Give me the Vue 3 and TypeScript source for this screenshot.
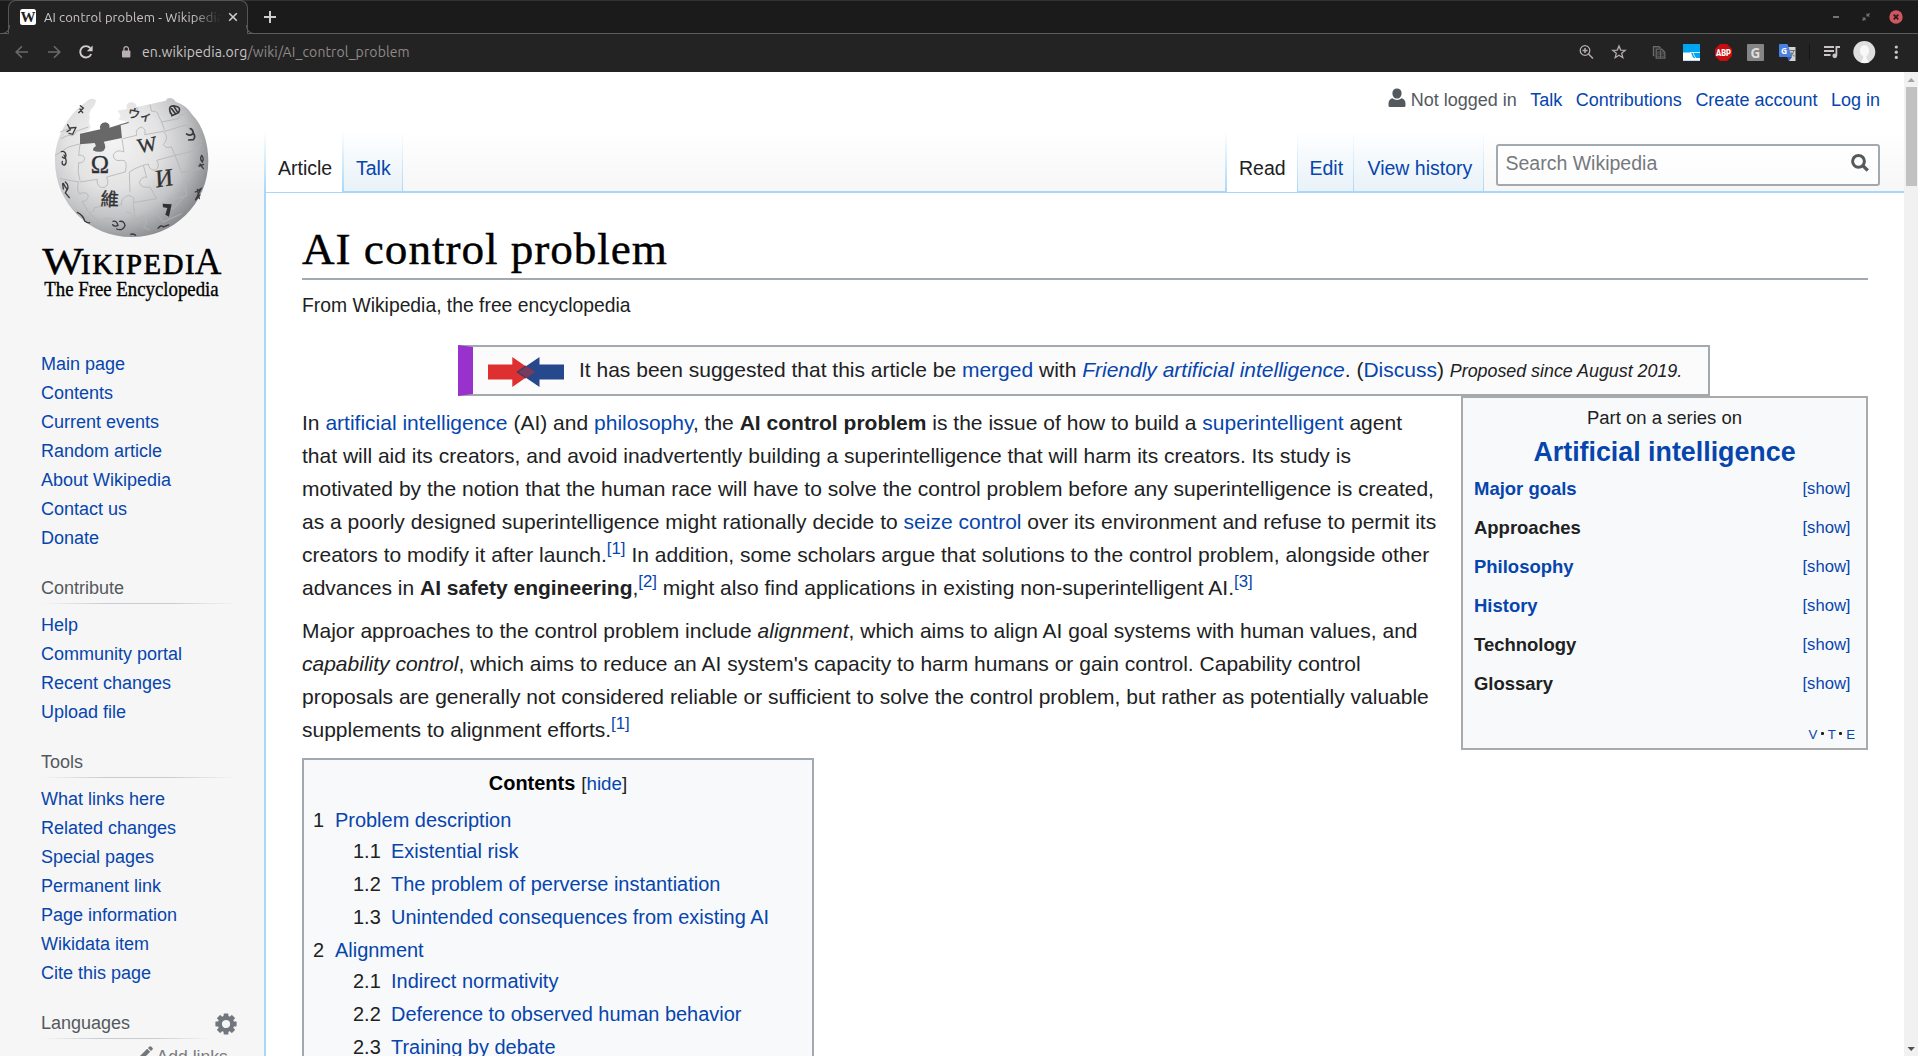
<script setup lang="ts">
interface NavItem { label: string }
interface NavGroup { title: string; items: string[] }
interface TocEntry { num: string; label: string; sub: boolean }
interface SeriesRow { label: string; link: boolean }

const mainLinks: NavItem[] = [
  'Main page', 'Contents', 'Current events', 'Random article',
  'About Wikipedia', 'Contact us', 'Donate',
].map((label) => ({ label }))

const groups: NavGroup[] = [
  { title: 'Contribute', items: ['Help', 'Community portal', 'Recent changes', 'Upload file'] },
  {
    title: 'Tools',
    items: [
      'What links here', 'Related changes', 'Special pages', 'Permanent link',
      'Page information', 'Wikidata item', 'Cite this page',
    ],
  },
]

const toc: TocEntry[] = [
  { num: '1', label: 'Problem description', sub: false },
  { num: '1.1', label: 'Existential risk', sub: true },
  { num: '1.2', label: 'The problem of perverse instantiation', sub: true },
  { num: '1.3', label: 'Unintended consequences from existing AI', sub: true },
  { num: '2', label: 'Alignment', sub: false },
  { num: '2.1', label: 'Indirect normativity', sub: true },
  { num: '2.2', label: 'Deference to observed human behavior', sub: true },
  { num: '2.3', label: 'Training by debate', sub: true },
]

const series: SeriesRow[] = [
  { label: 'Major goals', link: true },
  { label: 'Approaches', link: false },
  { label: 'Philosophy', link: true },
  { label: 'History', link: true },
  { label: 'Technology', link: false },
  { label: 'Glossary', link: false },
]

const gearTeeth = [0, 45, 90, 135, 180, 225, 270, 315]
</script>

<template>
  <div class="window">
    <header class="browser">
      <div class="strip">
        <div class="tab">
          <svg class="favicon" viewBox="0 0 16 16">
            <rect width="16" height="16" rx="2.5" fill="#fff" />
            <text x="8" y="13" text-anchor="middle" textLength="15" lengthAdjust="spacingAndGlyphs" font-family="Liberation Serif, serif" font-size="14" font-weight="700" fill="#222">W</text>
          </svg>
          <span class="tab-title">AI control problem - Wikipedia</span>
          <svg class="tab-close" viewBox="0 0 10 10"><path d="M1.2 1.2l7.6 7.6M8.8 1.2L1.2 8.8" stroke="#d3cccc" stroke-width="1.6" /></svg>
        </div>
        <svg class="new-tab" viewBox="0 0 14 14"><path d="M7 1v12M1 7h12" stroke="#d3cccc" stroke-width="2" /></svg>
        <svg class="win-buttons" viewBox="0 0 80 20">
          <rect x="6" y="9" width="6" height="2" fill="#757575" />
          <path d="M35 10.500h3.500V14zM39.500 6v3.500H43z" fill="#757575" /><path d="M35.500 13.500l2-2M40.500 8.500l2-2" stroke="#757575" stroke-width="1.400" />
          <circle cx="69" cy="10" r="6.7" fill="#d25560" /><path d="M66.700 7.700l4.600 4.600M71.300 7.700l-4.600 4.600" stroke="#262021" stroke-width="1.900" />
        </svg>
      </div>
      <div class="toolbar">
        <svg class="tb back" viewBox="0 0 24 24"><path d="M18 12H6.500M12 6.200L6.200 12l5.800 5.800" fill="none" stroke="#6e6969" stroke-width="1.600" /></svg>
        <svg class="tb fwd" viewBox="0 0 24 24"><path d="M6 12h11.500M12 6.200l5.800 5.800-5.800 5.800" fill="none" stroke="#6e6969" stroke-width="1.600" /></svg>
        <svg class="tb reload" viewBox="0 0 24 24"><path d="M17.200 14a5.700 5.700 0 1 1-1-6" fill="none" stroke="#d3cccc" stroke-width="1.900" /><path d="M18.600 5.400v5.800h-5.800z" fill="#d3cccc" /></svg>
        <svg class="lock" viewBox="0 0 10 12"><rect x="1" y="4.500" width="8.400" height="7" rx="1" fill="#b9b1b1" /><path d="M2.900 5V3a2.300 2.300 0 0 1 4.600 0v2" fill="none" stroke="#b9b1b1" stroke-width="1.200" /></svg>
        <span class="url">en.wikipedia.org<i>/wiki/AI_control_problem</i></span>
        <div class="extensions">
          <svg class="tb" viewBox="0 0 24 24"><circle cx="11" cy="10.500" r="4.800" fill="none" stroke="#b5adad" stroke-width="1.300" /><path d="M14.500 14l4.500 4.500M11 8v5M8.500 10.500h5" stroke="#b5adad" stroke-width="1.500" /></svg>
          <svg class="tb star" viewBox="0 0 24 24"><path d="M12 5.900l1.700 4.200 4.500.3-3.500 2.900 1.100 4.400-3.800-2.400-3.800 2.400 1.100-4.400-3.500-2.900 4.500-.3z" fill="none" stroke="#b5adad" stroke-width="1.300" /></svg>
          <svg class="tb copy" viewBox="0 0 24 24"><path d="M7.500 15.500h-1V6.700h5.500l1.500 1.500" fill="none" stroke="#6b6868" stroke-width="1.400" /><path d="M9.200 9.200h5.600l3 3v6H9.200z" fill="none" stroke="#6b6868" stroke-width="1.300" /><path d="M10 12h7M10 14h7M10 16.200h7M13.500 10v8" stroke="#6b6868" stroke-width=".9" /></svg>
          <svg class="tb ext" viewBox="0 0 24 24"><rect x="4" y="4" width="17" height="16.700" fill="#00a4ef" /><path d="M4 12.500h7q1.500 0 2 2.500t2 3H21v2.700H4z" fill="#fff" /><path d="M11 12.500h10M14 12.500q1.200 4.500 3 5.500" fill="none" stroke="#fff" stroke-width=".8" /></svg>
          <svg class="tb ext" viewBox="0 0 24 24"><path d="M9 4h7l5 5v7l-5 5H9l-5-5V9z" fill="#c70d0d" /><text x="12.500" y="15.600" text-anchor="middle" textLength="15" lengthAdjust="spacingAndGlyphs" font-family="Roboto, sans-serif" font-size="8.500" font-weight="900" fill="#fff">ABP</text></svg>
          <svg class="tb ext" viewBox="0 0 24 24"><rect x="4" y="4" width="17" height="17" rx="1" fill="#858585" /><text x="12.500" y="17.500" text-anchor="middle" font-family="Open Sans, sans-serif" font-size="13.500" font-weight="700" fill="#ddd">G</text></svg>
          <svg class="tb ext" viewBox="0 0 24 24"><path d="M11 7h9.500v14H14z" fill="#d4d4d4" /><path d="M5 4h7.500l4.500 13H5a1 1 0 0 1-1-1V5a1 1 0 0 1 1-1z" fill="#4a80e0" /><path d="M12 17h5l-3 4z" fill="#3457b5" /><path d="M15 10.500h5M18.800 10.500c-.5 3-2 4.500-3 5.200M16 12.500l3.500 3.800" stroke="#69767d" stroke-width="1.100" fill="none" /><text x="9" y="14" text-anchor="middle" font-family="Open Sans, sans-serif" font-size="8.500" font-weight="700" fill="#fff">G</text></svg>
          <span class="divider"></span>
          <svg class="tb" viewBox="0 0 24 24"><path d="M4 7h10M4 11h10M4 15h6.500" stroke="#cbc4c4" stroke-width="1.800" /><path d="M16.400 15.500V7h3.600" stroke="#cbc4c4" stroke-width="1.800" fill="none" /><circle cx="14.800" cy="15.800" r="2.400" fill="#cbc4c4" /></svg>
          <svg class="tb" viewBox="0 0 24 24"><circle cx="12.300" cy="12" r="11" fill="#dedede" /><path d="M8 10.500C8 3.500 17 3.500 17 10.500c0 3-1.200 4.500-2.500 5.500v2.500l3 3.800q-5 1.600-9 .2l2.500-3.500.3-3C9.200 15 8 13.500 8 10.500z" fill="#f8f8f8" /></svg>
          <svg class="tb" viewBox="0 0 24 24"><g fill="#cbc4c4"><circle cx="12.300" cy="7" r="1.600" /><circle cx="12.300" cy="12.200" r="1.600" /><circle cx="12.300" cy="17.400" r="1.600" /></g></svg>
        </div>
      </div>
    </header>

    <div class="page">
      <div class="viewport">
        <aside class="panel">
          <svg class="logo" viewBox="120 60 550 640">
            <defs>
              <radialGradient id="globe" gradientUnits="userSpaceOnUse" cx="340" cy="210" r="310">
                <stop offset="0" stop-color="#f4f4f4" />
                <stop offset=".45" stop-color="#e3e3e4" />
                <stop offset=".72" stop-color="#c3c4c6" />
                <stop offset="1" stop-color="#87888b" />
              </radialGradient>
            </defs>
            <path fill="url(#globe)" d="M258 90Q272 74 288 84Q287 99 275 110Q264 124 270 138Q263 150 272 163Q268 181 248 181L240 184V216L365 200L362 158L386 150L356 143L362 130L352 116L381 111Q374 94 394 90Q412 93 408 106L490 88Q501 86 500 80Q517 73 527 89Q560 100 577 128C610 162 625 216 625 266C625 394 522 495 395 495C268 495 165 394 165 266C165 200 202 127 258 90Z" />
            <path fill="#686868" d="M240 185L301 172Q296 154 316 151Q332 155 328 167L386 149V153L362 160L366 198L311 209Q321 225 310 237Q293 243 279 235Q278 228 288 222L284 213L240 217Z" />
            <g fill="none" stroke="#b4b4b6" stroke-width="2.500">
              <path d="M240 216L236 250Q252 248 254 260Q250 275 236 272Q231 300 240 325M366 200L372 240Q350 230 340 248Q340 270 365 265Q385 262 376 300L320 315Q330 340 312 347Q288 346 292 322L240 330" />
              <path d="M235 330Q230 355 238 366Q258 355 265 372Q262 390 246 388L268 425Q285 418 284 406L365 398Q360 380 385 370Q408 375 400 392L470 380L450 345Q425 350 418 332Q425 312 440 316L430 280Q400 290 388 300L390 360" />
              <path d="M368 200L410 190Q405 170 425 165Q440 173 434 188L490 178Q510 195 490 218Q500 232 514 224L525 250L470 265Q482 283 466 295Q446 294 445 276L430 280M525 250L590 235Q595 220 606 216M525 250L545 302Q567 292 577 308Q568 325 552 326L560 372L500 385" />
              <path d="M410 105L414 120M450 98L455 118Q475 116 475 130L485 150L535 140Q540 125 553 128M485 150L495 178L560 158L586 205L607 207M545 302L610 288M400 395L405 440Q425 445 428 430Q450 450 430 465L450 475M268 425L300 450Q330 430 340 446M380 420Q397 420 400 440L470 425Q480 400 520 410L555 372M470 425L490 450L545 425M165 250Q185 240 205 225L238 216M180 320Q205 325 238 330M182 200L205 190Q225 195 228 178L265 165M180 180L220 165" />
            </g>
            <g font-family="Liberation Serif, Noto Sans CJK SC, serif" fill="#303034" text-anchor="middle">
              <text x="300" y="303" font-size="74" stroke="#303034">Ω</text>
              <text transform="translate(445 239) rotate(-10)" font-size="62" stroke="#303034">W</text>
              <text transform="translate(494 343) rotate(-8) skewX(-5)" font-size="74" stroke="#303034">И</text>
              <text transform="translate(328 401) rotate(3)" font-size="55" stroke="#303034">維</text>
              <text transform="translate(417 142) rotate(12)" font-size="37" stroke="#303034">ウィ</text>
            </g>
            <path d="M488 395L515 397L507 434L496 428L502 408L489 406Z" fill="#303034" />
            <g fill="none" stroke="#3a3a3e" stroke-width="5" stroke-linecap="round">
              <path d="M512 124Q502 98 525 102Q545 105 536 122L515 131M515 110L527 126M522 104L533 121M510 119L517 130" />
              <path d="M560 186Q572 194 580 183Q578 171 571 170M580 183Q588 195 580 203L566 204" />
              <path d="M241 101L250 108L236 122M240 111L248 122M203 158L211 173L201 179M212 168L228 166M228 166L218 187L207 184" stroke-width="4" />
              <path d="M184 239Q196 235 198 251Q196 264 187 255M192 249Q204 269 194 279Q184 279 187 268M196 330Q208 340 202 353Q194 344 190 334M204 347L196 363L208 377M188 335L190 351M605 250Q598 260 607 270Q613 259 605 250M600 276L610 290M597 282L611 277" stroke-width="4" />
              <path d="M232 421Q250 430 254 447Q264 455 269 452M339 448Q350 444 354 460Q342 466 338 458M359 448Q373 446 375 461Q367 478 350 471M392 487Q399 484 407 490M474 469Q484 457 490 465L506 459M586 360L603 350L586 385L600 369M592 352L598 380" stroke-width="4" />
            </g>
            <g font-family="Linux Libertine, Liberation Serif, serif" fill="#000" stroke="#000">
              <text x="127" y="605" font-size="114" textLength="124" lengthAdjust="spacingAndGlyphs">W</text>
              <text x="243" y="605" font-size="86" textLength="341" lengthAdjust="spacing" stroke-width="2">IKIPEDI</text>
              <text x="584" y="605" font-size="114" textLength="80" lengthAdjust="spacingAndGlyphs">A</text>
              <text x="133" y="672" font-size="60" textLength="523" lengthAdjust="spacingAndGlyphs">The Free Encyclopedia</text>
            </g>
          </svg>

          <ul class="nav first">
            <li v-for="item in mainLinks" :key="item.label"><a>{{ item.label }}</a></li>
          </ul>
          <section v-for="group in groups" :key="group.title" class="portal">
            <h3>{{ group.title }}</h3>
            <ul class="nav">
              <li v-for="label in group.items" :key="label"><a>{{ label }}</a></li>
            </ul>
          </section>
          <section class="portal languages">
            <h3>
              <span>Languages</span>
              <svg class="gear" viewBox="0 0 22 22">
                <rect v-for="angle in gearTeeth" :key="angle" x="8.600" y=".4" width="4.800" height="5" rx=".6" fill="#72777d" :transform="`rotate(${angle} 11 11)`" />
                <circle cx="11" cy="11" r="6.200" fill="none" stroke="#72777d" stroke-width="4.200" />
              </svg>
            </h3>
            <div class="add-links">
              <svg viewBox="0 0 14 14"><path d="M0 14l1-4 7.200-7.200 3 3L4 13zM9 2l1.500-1.500q.8-.6 1.500 0l1.600 1.600q.6.8 0 1.400L12 5z" fill="#72777d" /></svg>
              <span>Add links</span>
            </div>
          </section>
        </aside>

        <main class="main">
          <div class="head">
            <nav class="personal">
              <svg class="user" viewBox="0 0 18 20"><path d="M9 10.500c-2.800 0-4.600-2.400-4.600-5.300S6.200.4 9 .4s4.600 1.900 4.600 4.800-1.800 5.300-4.600 5.300zM4.300 10.200Q9 13.800 13.700 10.200 17.500 11.500 17.500 15.500v2q0 1.500-1.500 1.500H2Q.5 19 .5 17.500v-2q0-4 3.800-5.300z" fill="#54595d" /></svg>
              <span class="anon">Not logged in</span>
              <a>Talk</a><a>Contributions</a><a>Create account</a><a>Log in</a>
            </nav>
            <div class="tabs">
              <span class="t selected article">Article</span>
              <span class="t talk"><a>Talk</a></span>
              <span class="grow"></span>
              <span class="t selected read">Read</span>
              <span class="t edit"><a>Edit</a></span>
              <span class="t history"><a>View history</a></span>
              <div class="search">
                <span>Search Wikipedia</span>
                <svg viewBox="0 0 20 20"><circle cx="8.500" cy="8.300" r="5.900" fill="none" stroke="#54595d" stroke-width="3" /><path d="M12.500 12.300l5.300 5.200" stroke="#54595d" stroke-width="3.200" /></svg>
              </div>
            </div>
          </div>

          <article class="content">
            <h1>AI control problem</h1>
            <div class="site-sub">From Wikipedia, the free encyclopedia</div>

            <div class="notice">
              <svg class="merge" viewBox="0 0 76 30">
                <path d="M0 7.500h24.300V0L46 15 24.300 30v-7.500H0z" fill="#de3030" />
                <path d="M76 7.500H51.500V0L29.500 15l22 15v-7.500H76z" fill="#26488d" />
                <path d="M37.700 9.300L46 15l-8.300 5.700-8.200-5.700z" fill="#773b5d" stroke="#8a3550" stroke-width="1.200" />
                <path d="M37.700 9.300L29.500 15l8.200 5.700" fill="none" stroke="#34406f" stroke-width="1.200" />
              </svg>
              <span>It has been suggested that this article be <a>merged</a> with <em><a>Friendly artificial intelligence</a></em>. (<a>Discuss</a>) <em class="small">Proposed since August 2019.</em></span>
            </div>

            <div class="body">
              <div class="text">
                <p>
                  In <a>artificial intelligence</a> (AI) and <a>philosophy</a>, the <b>AI control problem</b> is the issue of how to build a <a>superintelligent</a> agent<br>
                  that will aid its creators, and avoid inadvertently building a superintelligence that will harm its creators. Its study is<br>
                  motivated by the notion that the human race will have to solve the control problem before any superintelligence is created,<br>
                  as a poorly designed superintelligence might rationally decide to <a>seize control</a> over its environment and refuse to permit its<br>
                  creators to modify it after launch.<sup><a>[1]</a></sup> In addition, some scholars argue that solutions to the control problem, alongside other<br>
                  advances in <b>AI safety engineering</b>,<sup><a>[2]</a></sup> might also find applications in existing non-superintelligent AI.<sup><a>[3]</a></sup>
                </p>
                <p>
                  Major approaches to the control problem include <i>alignment</i>, which aims to align AI goal systems with human values, and<br>
                  <i>capability control</i>, which aims to reduce an AI system's capacity to harm humans or gain control. Capability control<br>
                  proposals are generally not considered reliable or sufficient to solve the control problem, but rather as potentially valuable<br>
                  supplements to alignment efforts.<sup><a>[1]</a></sup>
                </p>
                <div class="toc">
                  <div class="toc-title"><b>Contents</b><span>[<a>hide</a>]</span></div>
                  <ul>
                    <li v-for="entry in toc" :key="entry.num" :class="{ sub: entry.sub }">
                      <span>{{ entry.num }}</span><a>{{ entry.label }}</a>
                    </li>
                  </ul>
                </div>
              </div>

              <aside class="series">
                <div class="series-top">Part on a series on</div>
                <div class="series-title"><a>Artificial intelligence</a></div>
                <div v-for="row in series" :key="row.label" class="series-row">
                  <b><a v-if="row.link">{{ row.label }}</a><template v-else>{{ row.label }}</template></b>
                  <a class="show">[show]</a>
                </div>
                <div class="vte"><a>V</a><i></i><a>T</a><i></i><a>E</a></div>
              </aside>
            </div>
          </article>
        </main>
      </div>
      <div class="scrollbar">
        <svg viewBox="0 0 14 15"><path d="M3.500 10h7.400L7.200 6z" fill="#a3a3a3" /></svg>
        <div class="thumb"></div>
        <span class="track"></span>
        <svg viewBox="0 0 14 15"><path d="M3.500 6h7.400L7.200 10z" fill="#505050" /></svg>
      </div>
    </div>
  </div>
</template>

<style>
html, body { margin: 0; overflow: hidden; }
</style>

<style scoped>
* { box-sizing: border-box; }
.window { width: 1918px; height: 1056px; overflow: hidden; display: flex; flex-direction: column; font-family: "Liberation Sans", Arial, sans-serif; color: #202122; background: #fff; }
a { color: #0645ad; }
ul { list-style: none; margin: 0; padding: 0; }
svg { display: block; flex: none; }

.browser { height: 72px; flex: none; background: #232323; font-family: Ubuntu, "Noto Sans", sans-serif; }
.strip { height: 34px; display: flex; align-items: flex-start; background: #1b1b1b; border-top: 1px solid #333; border-bottom: 1px solid #5b5b5b; }
.tab { width: 240px; height: 34px; margin: -1px 0 0 8px; display: flex; align-items: center; padding: 0 0 1px 11px; background: #232323; border: 1px solid #555; border-bottom: none; border-radius: 8px 8px 0 0; position: relative; }
.tab::before, .tab::after { content: ""; position: absolute; bottom: 0; width: 8px; height: 8px; border-bottom: 1px solid #5b5b5b; }
.tab::before { left: -8px; border-right: 1px solid #5b5b5b; border-bottom-right-radius: 8px; }
.tab::after { right: -8px; border-left: 1px solid #5b5b5b; border-bottom-left-radius: 8px; }
.favicon { width: 16px; height: 16px; }
.tab-title { margin-left: 8px; width: 177px; overflow: hidden; white-space: nowrap; font-size: 13px; line-height: 20px; letter-spacing: .1px; color: #cbc4c4; -webkit-mask-image: linear-gradient(90deg, #000 84%, transparent); mask-image: linear-gradient(90deg, #000 84%, transparent); }
.tab-close { width: 10px; height: 10px; margin-left: 6.500px; }
.new-tab { width: 14px; height: 14px; margin: 9px 0 0 15px; }
.win-buttons { width: 80px; height: 20px; margin: 6px 11px 0 auto; }
.toolbar { height: 38px; display: flex; align-items: center; padding: 0 10px 2px; }
.tb { width: 24px; height: 24px; }
.fwd { margin-left: 8px; }
.reload { margin-left: 8px; }
.lock { width: 10px; height: 12px; margin-left: 23px; }
.url { margin-left: 11px; font-size: 14px; line-height: 22px; letter-spacing: .12px; color: #cbc4c4; white-space: nowrap; }
.url i { font-style: normal; color: #8f8989; }
.extensions { margin-left: auto; display: flex; align-items: center; }
.star { margin-left: 9px; }
.copy { margin-left: 16px; }
.ext { margin-left: 8px; }
.divider { width: 1px; height: 16px; margin: 0 10px; background: #141414; }
.extensions .divider ~ .tb + .tb { margin-left: 8px; }

.page { flex: 1; min-height: 0; display: flex; }
.viewport { width: 1904px; height: 984px; overflow: hidden; display: flex; background: linear-gradient(#fff 50%, #f6f6f6 100%) 0 0 / 100% 120px no-repeat #f6f6f6; }

.panel { width: 264px; flex: none; padding: 20px 0 0 40px; font-size: 18px; }
.logo { width: 183.33px; height: 213.33px; overflow: visible; }
.nav { padding-left: 1px; line-height: 29px; }
.nav.first { margin-top: 44.67px; }
.portal h3 { margin: 21px 0 0 1px; width: 196px; height: 30px; font-size: 18px; font-weight: 400; line-height: 29px; color: #54595d; background: linear-gradient(90deg, rgba(200,204,209,0), #c8ccd1 33%, #c8ccd1 66%, rgba(200,204,209,0)) 0 100% / 100% 1px no-repeat; }
.portal .nav { padding-top: 7px; }
.portal.languages h3 { display: flex; justify-content: space-between; background-size: 172px 1px; }
.gear { width: 22px; height: 22px; margin: 4px .500px 0 0; }
.add-links { display: flex; align-items: flex-start; margin: 4px 0 0 99px; font-size: 17.6px; line-height: 29px; color: #797d81; }
.add-links svg { width: 14px; height: 14px; margin: 3px 3.500px 0 0; }

.main { width: 1640px; display: flex; flex-direction: column; }
.head { height: 119px; flex: none; display: flex; flex-direction: column; justify-content: space-between; }
.personal { display: flex; justify-content: flex-end; align-items: center; height: 29px; margin-top: 14px; padding-right: 24px; font-size: 18px; line-height: 29px; }
.personal a { margin-left: 13.500px; }
.anon { color: #54595d; margin-left: 5px; }
.user { width: 18px; height: 20px; margin-top: -6px; }
.tabs { display: flex; align-items: stretch; height: 59px; font-size: 19.5px; line-height: 22px; white-space: nowrap; }
.t { padding-top: 25px; position: relative; background: linear-gradient(#fff, #e8f2f8); border-style: solid; border-width: 0 1px 0 0; border-image: linear-gradient(#fff, #a7d7f9) 1; }
.t.selected { background: #fff; margin-bottom: -1px; z-index: 1; }
.article { width: 80px; padding-left: 12px; border-width: 0 2px; }
.talk { width: 59px; padding-left: 12px; }
.grow { flex: 1; }
.read { width: 73px; padding-left: 12px; border-width: 0 1px 0 2px; }
.edit { width: 56px; padding-left: 11.500px; }
.history { width: 130px; padding-left: 13.500px; }
.search { width: 384px; height: 42px; margin: 12px 24px 0 12px; padding: 0 8px 4px 7.500px; display: flex; align-items: center; justify-content: space-between; background: rgba(255,255,255,.7); border: 2px solid #a2a9b1; border-radius: 3px; color: #75797d; }
.search svg { width: 20px; height: 20px; }

.content { flex: none; height: 865px; overflow: hidden; background: #fff; border: solid #a7d7f9; border-width: 2px 0 0 2px; padding: 0 36px; }
h1 { margin: 0; height: 87px; padding-top: 31px; border-bottom: 2px solid #a2a9b1; font: 400 45.2px/50px Georgia, "Liberation Serif", serif; letter-spacing: .95px; -webkit-text-stroke: .4px #000; color: #000; }
.site-sub { height: 65px; padding-top: 15px; font-size: 19.32px; line-height: 21px; }
.notice { width: 1252px; height: 51px; margin-left: 156px; display: flex; align-items: center; padding-left: 15px; font-size: 21px; line-height: 33px; white-space: nowrap; background: #fbfbfb; border: 2px solid #a2a9b1; border-left: 15px solid #9932cc; }
.merge { width: 76px; height: 30px; margin: 2px 15px 0 0; }
.notice .small { font-size: 17.85px; }
.body { display: flex; justify-content: space-between; align-items: flex-start; }
.text { padding-top: 10px; font-size: 21px; line-height: 33px; white-space: nowrap; word-spacing: .04px; }
p { margin: 0 0 10px; }
sup { font-size: 16.8px; line-height: 1; vertical-align: 8px; }
.toc { width: 512px; height: 400px; margin-top: 12px; padding: 7px 10px; background: #f8f9fa; border: 2px solid #a2a9b1; font-size: 19.95px; }
.toc-title { text-align: center; line-height: 32px; margin-bottom: 5px; }
.toc-title b { color: #000; }
.toc-title span { font-size: 18.75px; margin-left: 6px; }
.toc li { display: flex; line-height: 31px; margin-left: -1px; }
.toc li span { width: 22px; }
.toc li.sub { padding-left: 40px; margin-bottom: 2px; }
.toc li.sub span { width: 38px; }

.series { width: 407px; height: 354px; flex: none; padding: 0 11px; background: #f8f9fa; border: 2px solid #aaa; font-size: 18.48px; }
.series-top { text-align: center; padding-top: 6px; line-height: 27px; }
.series-title { text-align: center; font-size: 26.8px; font-weight: 700; line-height: 40px; padding: 1px 0 3px; }
.series-row { display: flex; justify-content: space-between; line-height: 27px; margin-bottom: 12px; padding: 0 4.500px 0 0; }
.series-row .show { font-size: 16.63px; }
.vte { display: flex; justify-content: flex-end; align-items: center; gap: 3.700px; margin-top: 26px; font-size: 13.3px; line-height: 24px; }
.vte i { width: 3px; height: 3px; margin-top: -4px; background: #202122; border-radius: 1px; }

.scrollbar { width: 14px; flex: none; display: flex; flex-direction: column; background: #f1f1f1; }
.scrollbar svg { width: 14px; height: 15px; }
.thumb { height: 99px; margin: 0 1px 0 2px; background: #c1c1c1; }
.track { flex: 1; }
</style>
